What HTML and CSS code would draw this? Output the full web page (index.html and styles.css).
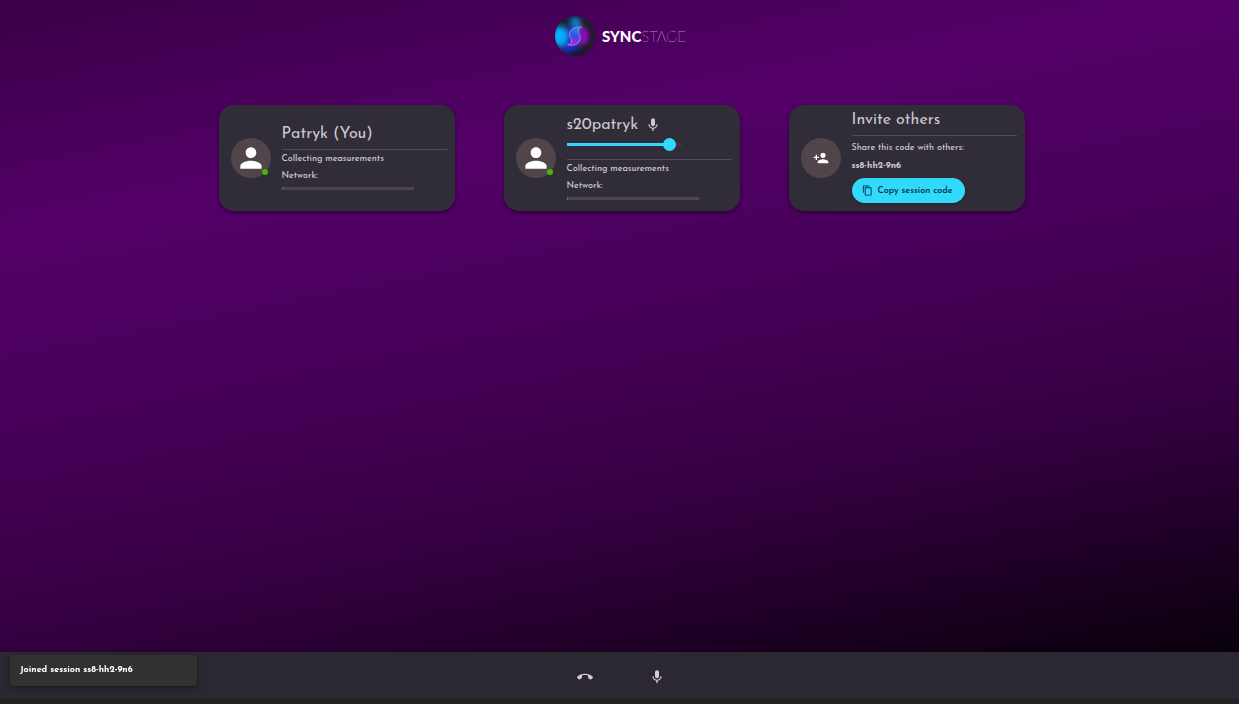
FILE: index.html
```html
<!DOCTYPE html>
<html lang="en">
<head>
<meta charset="utf-8">
<meta name="viewport" content="width=device-width, initial-scale=1">
<title>SyncStage session</title>
<link rel="stylesheet" href="styles.css">
</head>
<body>
<svg class="defs" aria-hidden="true">
  <symbol id="person" viewBox="0 0 24 24"><path d="M12 12c2.21 0 4-1.79 4-4s-1.79-4-4-4-4 1.79-4 4 1.79 4 4 4zm0 2c-2.67 0-8 1.34-8 4v2h16v-2c0-2.66-5.33-4-8-4z"/></symbol>
  <symbol id="mic" viewBox="0 0 24 24"><path d="M12 14c1.66 0 2.99-1.34 2.99-3L15 5c0-1.66-1.34-3-3-3S9 3.34 9 5v6c0 1.66 1.34 3 3 3zm5.300-3c0 3-2.540 5.100-5.300 5.100S6.700 14 6.700 11H5c0 3.410 2.720 6.230 6 6.720V21h2v-3.280c3.280-.480 6-3.300 6-6.720h-1.700z"/></symbol>
</svg>
<header class="header">
  <svg class="logo-mark" viewBox="0 0 40 40" aria-hidden="true">
    <defs>
      <clipPath id="disc"><circle cx="20" cy="20" r="20"/></clipPath>
      <filter id="soft" x="-50%" y="-50%" width="200%" height="200%"><feGaussianBlur stdDeviation="2.600"/></filter>
      <linearGradient id="swirl" x1="0.600" y1="0" x2="0.400" y2="1"><stop offset="0" stop-color="#1697f0"/><stop offset="0.500" stop-color="#3a4be0"/><stop offset="1" stop-color="#c01bd6"/></linearGradient>
    </defs>
    <g clip-path="url(#disc)">
      <rect width="40" height="40" fill="#1f1c22"/>
      <g filter="url(#soft)">
        <ellipse cx="14" cy="24" rx="11" ry="13" fill="#1f2fc4"/>
        <ellipse cx="4" cy="20" rx="8" ry="10" fill="#00b0fa"/>
        <ellipse cx="21" cy="7" rx="5" ry="6" fill="#0880d8"/>
        <ellipse cx="28" cy="20" rx="6" ry="9" fill="#8a08c0"/>
        <ellipse cx="10" cy="4" rx="6" ry="4" fill="#152037"/>
        <ellipse cx="22" cy="37" rx="9" ry="4" fill="#191632"/>
      </g>
    </g>
    <path d="M26.500 11c-7-.600-12 2.500-12 7.500 0 3 2 4 2 6.500 0 2-1.200 3.200-4 3.800 7 1.700 12.700-1 12.700-7 0-3-1.700-3.800-1.700-6.300 0-2.200 1-3.800 3-4.500z" fill="url(#swirl)" stroke="#a887ee" stroke-width="0.900"/>
  </svg>
  <div class="wordmark"><b>SYNC</b><span>STAGE</span></div>
</header>

<main class="cards">
  <section class="card">
    <div class="avatar"><svg class="person"><use href="#person"/></svg><i class="status"></i></div>
    <div class="body">
      <h2 class="name">Patryk (You)</h2>
      <hr class="divider">
      <p class="line">Collecting measurements</p>
      <p class="line" id="net-a">Network:</p>
      <progress class="meter" value="1" max="100" aria-labelledby="net-a"></progress>
    </div>
  </section>

  <section class="card">
    <div class="avatar"><svg class="person"><use href="#person"/></svg><i class="status"></i></div>
    <div class="body">
      <h2 class="name name-remote">s20patryk <svg class="name-mic"><use href="#mic"/></svg></h2>
      <input class="volume" type="range" min="0" max="100" value="95" aria-label="Volume of s20patryk">
      <hr class="divider">
      <p class="line">Collecting measurements</p>
      <p class="line" id="net-b">Network:</p>
      <progress class="meter" value="1" max="100" aria-labelledby="net-b"></progress>
    </div>
  </section>

  <section class="card">
    <div class="avatar"><svg class="invite" viewBox="0 0 24 24"><path d="M15 12c2.210 0 4-1.790 4-4s-1.790-4-4-4-4 1.790-4 4 1.790 4 4 4zm-9-2V7H4v3H1v2h3v3h2v-3h3v-2H6zm9 4c-2.670 0-8 1.340-8 4v2h16v-2c0-2.660-5.330-4-8-4z"/></svg></div>
    <div class="body body-invite">
      <h2 class="name">Invite others</h2>
      <hr class="divider">
      <p class="line">Share this code with others:</p>
      <p class="line code">ss8-hh2-9n6</p>
      <button class="copy" type="button"><svg class="copy-icon" viewBox="0 0 24 24"><path d="M16 1H4c-1.100 0-2 .900-2 2v14h2V3h12V1zm3 4H8c-1.100 0-2 .900-2 2v14c0 1.100.900 2 2 2h11c1.100 0 2-.900 2-2V7c0-1.100-.900-2-2-2zm0 16H8V7h11v14z"/></svg>Copy session code</button>
    </div>
  </section>
</main>

<footer class="controls">
  <button class="control" type="button" aria-label="Leave session"><svg class="control-icon" viewBox="0 0 24 24"><path d="M12 9c-1.600 0-3.150.250-4.600.720v3.100c0 .390-.230.740-.560.900-.980.490-1.870 1.120-2.660 1.850-.180.180-.430.280-.700.280-.280 0-.530-.110-.710-.290L.290 13.080C.110 12.900 0 12.650 0 12.380s.110-.530.290-.710C3.340 8.780 7.460 7 12 7s8.660 1.780 11.710 4.670c.180.180.290.430.290.710s-.110.520-.290.700l-2.480 2.480c-.180.180-.430.290-.710.290-.270 0-.520-.110-.700-.280-.790-.740-1.690-1.360-2.670-1.850-.330-.160-.560-.500-.560-.900v-3.100C15.150 9.250 13.600 9 12 9z"/></svg></button>
  <button class="control" type="button" aria-label="Mute microphone"><svg class="control-icon"><use href="#mic"/></svg></button>
</footer>
<div class="toast" role="status">Joined session ss8-hh2-9n6</div>
</body>
</html>
```
FILE: styles.css
```css
* { box-sizing: border-box; }

body {
  margin: 0;
  min-height: 100vh;
  display: flex;
  flex-direction: column;
  background: linear-gradient(169deg, #3a0047 0%, #530068 25%, #460057 48%, #350041 67%, #1f0027 81%, #120016 89%, #050008 97%, #000 100%);
  color: #cdc8cd;
  font-family: "Josefin Sans", Lato, sans-serif;
  font-size: 9px;
  font-weight: 500;
}

svg { fill: currentColor; }

.defs { position: absolute; width: 0; height: 0; }

.header {
  display: flex;
  justify-content: center;
  align-items: center;
  gap: 7px;
  padding: 16px 0 49px 2px;
}

.logo-mark { width: 40px; height: 40px; }

.wordmark {
  color: #fff;
  font-family: Lato, sans-serif;
  font-size: 15px;
  line-height: 20px;
}

.wordmark b { font-weight: 900; }
.wordmark span { font-weight: 100; }

.cards {
  flex: 1;
  display: grid;
  grid-template-columns: repeat(auto-fit, 236px);
  grid-auto-rows: 106px;
  justify-content: center;
  gap: 24px 49px;
  width: 100%;
  max-width: 1000px;
  margin: 0 auto;
  padding-left: 4px;
}

.card {
  display: flex;
  align-items: center;
  gap: 11px;
  padding: 0 8px 0 12px;
  border-radius: 15px;
  background: #312d38;
  box-shadow: 0 2px 4px rgba(0, 0, 0, 0.4);
}

.avatar {
  position: relative;
  flex: none;
  display: grid;
  place-items: center;
  width: 40px;
  height: 40px;
  border-radius: 50%;
  background: #51444a;
  color: #fff;
}

.person { width: 32px; height: 32px; }
.invite { width: 16px; height: 16px; }

.status {
  position: absolute;
  right: 3px;
  bottom: 3px;
  width: 6px;
  height: 6px;
  border-radius: 50%;
  background: #44b700;
}

.body { flex: 1; min-width: 0; padding-bottom: 6px; }

.name {
  display: flex;
  align-items: center;
  gap: 7px;
  margin: 0;
  font-size: 16px;
  font-weight: 400;
  line-height: 29px;
}

.name-remote { padding-top: 2px; line-height: 25px; }

.name-mic { width: 16px; height: 16px; }

.divider {
  height: 1px;
  margin: 0;
  border: 0;
  background: #514d58;
}

.line { margin: 0; line-height: 17px; }

.meter {
  appearance: none;
  display: block;
  width: 80%;
  height: 3px;
  margin-top: 3px;
  border: 0;
  background: #51444a;
}

.meter::-webkit-progress-bar { background: #51444a; }
.meter::-webkit-progress-value { background: #2b8194; }

.volume {
  appearance: none;
  display: block;
  width: 115px;
  height: 13px;
  margin: 0 0 8px;
  background: linear-gradient(to right, #31d9fd 90%, #40353f 90%) center / 100% 3px no-repeat;
}

.volume::-webkit-slider-thumb {
  appearance: none;
  width: 13px;
  height: 13px;
  border-radius: 50%;
  background: #31d9fd;
}

.body-invite { padding-bottom: 8px; }
.body-invite .divider { margin-bottom: 3px; }
.body-invite .line { line-height: 18px; }
.body-invite .code { font-weight: 700; }

.copy {
  display: flex;
  align-items: center;
  gap: 5px;
  height: 25px;
  margin-top: 3px;
  padding: 0 12px 0 10px;
  border: 0;
  border-radius: 13px;
  background: #31d9fd;
  color: #07333d;
  font-family: inherit;
  font-size: 9px;
  font-weight: 600;
  box-shadow: 0 1px 3px rgba(0, 0, 0, 0.3);
}

.copy-icon { width: 11px; height: 11px; }

.controls {
  display: flex;
  justify-content: center;
  align-items: center;
  gap: 48px;
  height: 52px;
  padding: 2px 0 0 3px;
  border-bottom: 5px solid #242123;
  background: #2b2831;
}

.control {
  display: grid;
  place-items: center;
  width: 24px;
  height: 24px;
  padding: 0;
  border: 0;
  background: none;
  color: #dccbd3;
}

.control-icon { width: 16px; height: 16px; }

.toast {
  position: fixed;
  left: 10px;
  bottom: 18px;
  width: 187px;
  padding: 7px 10px 8px;
  border-radius: 2px;
  background: #313131;
  color: #fff;
  font-weight: 700;
  line-height: 16px;
  box-shadow: 0 2px 5px rgba(0, 0, 0, 0.4);
}
```
